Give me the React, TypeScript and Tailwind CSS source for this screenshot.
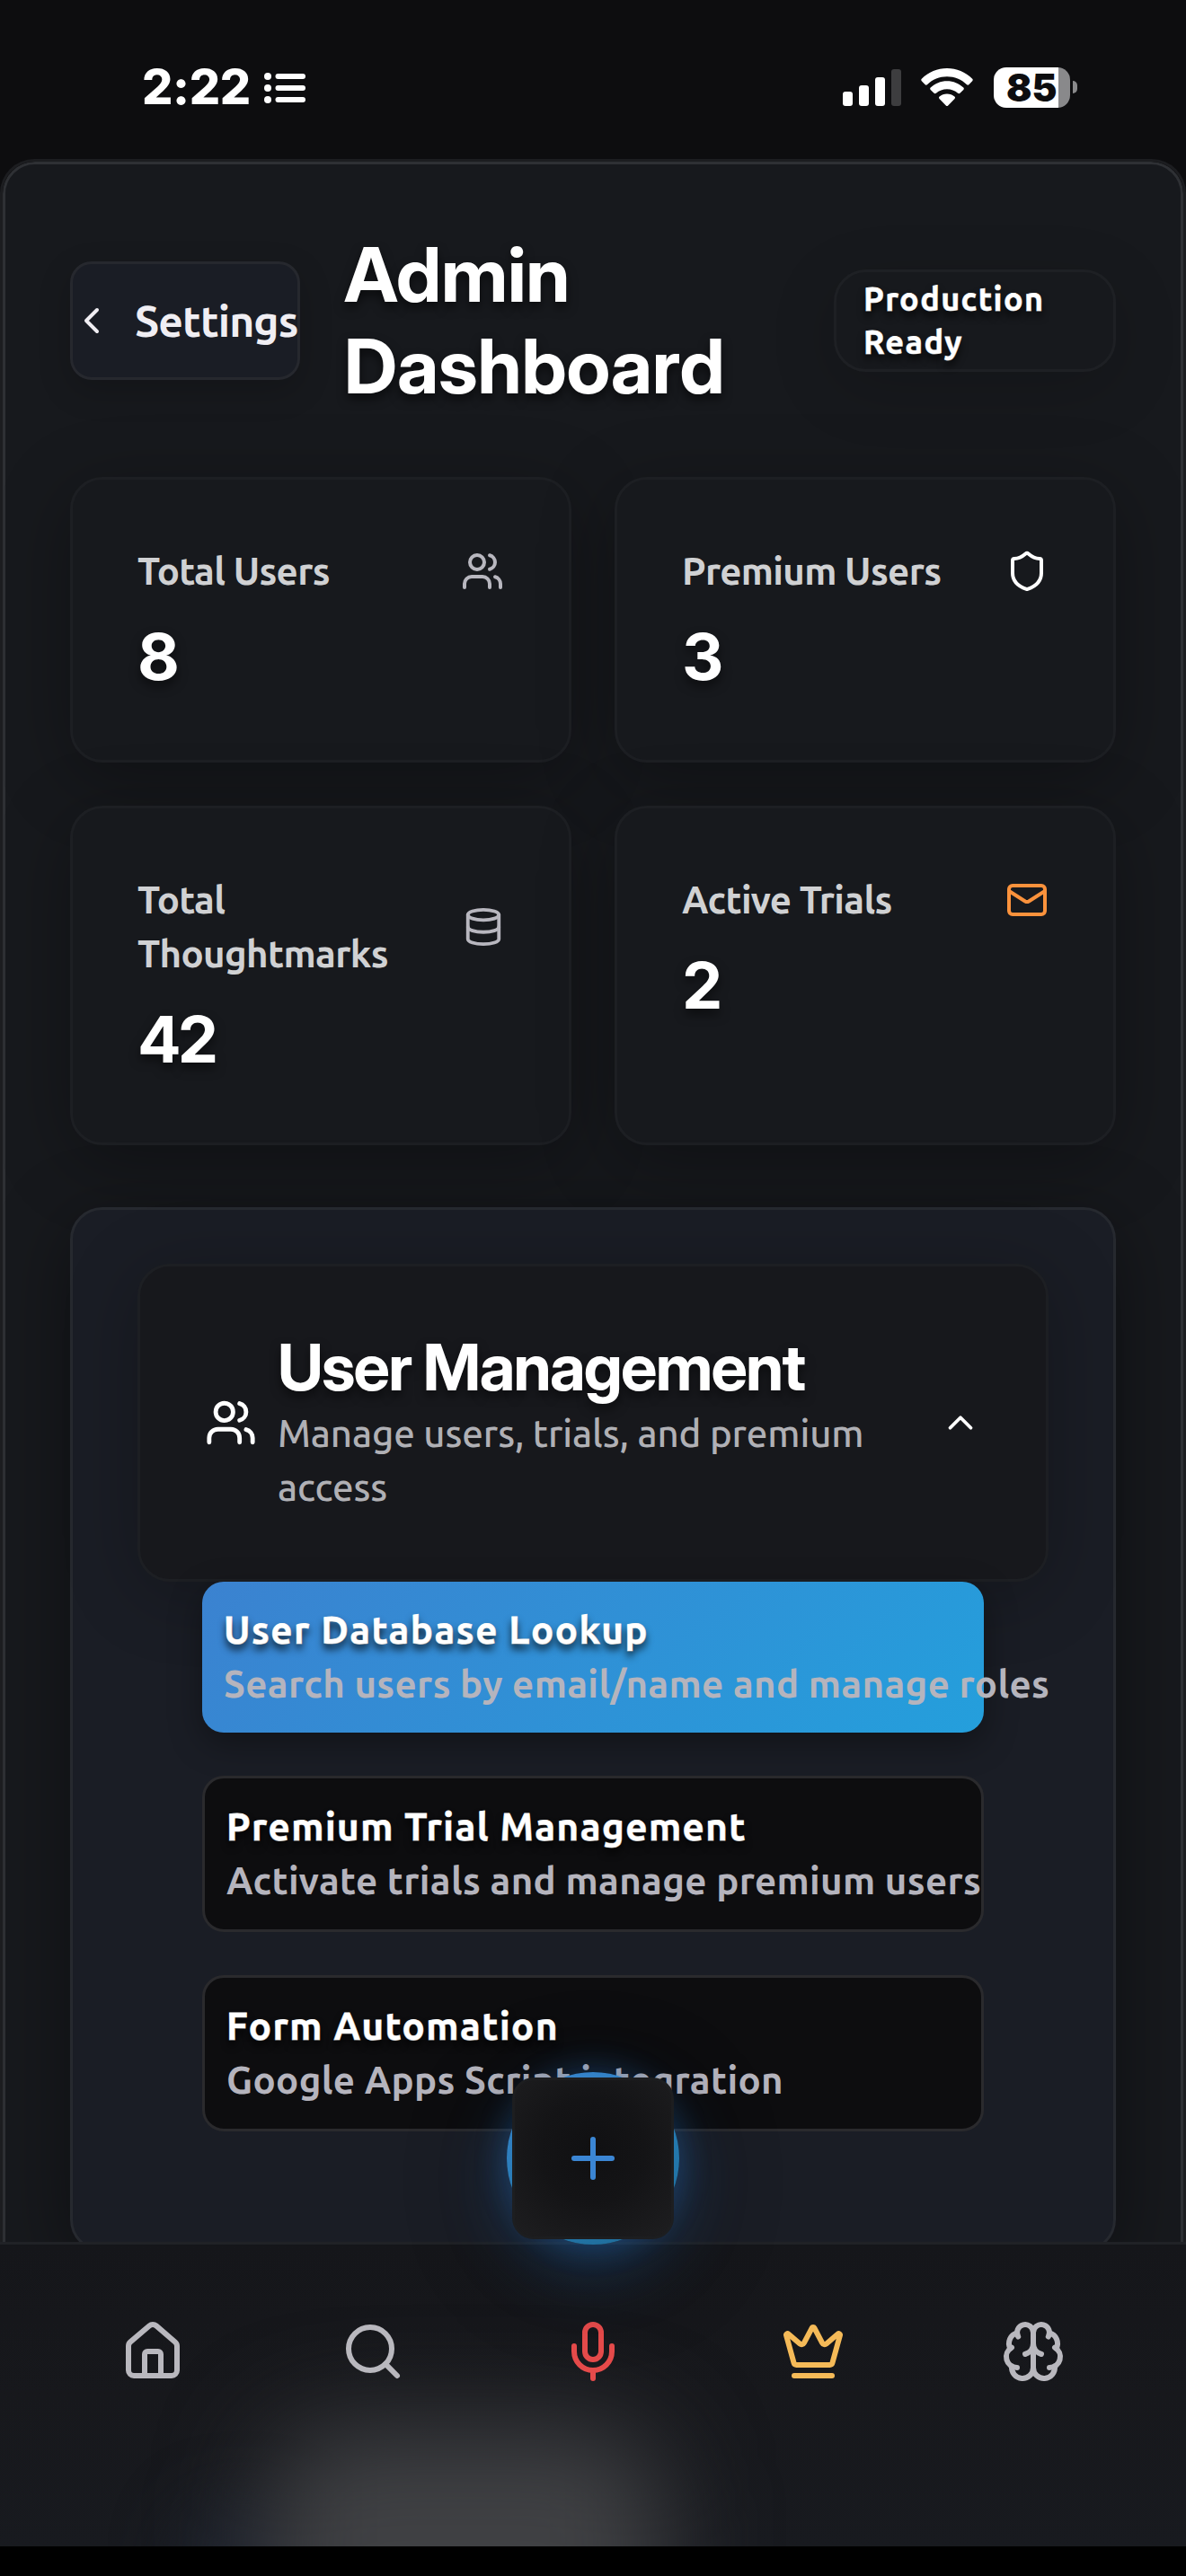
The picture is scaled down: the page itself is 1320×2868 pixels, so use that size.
import type { ReactNode } from "react";
import {
  Brain,
  ChevronLeft,
  ChevronUp,
  Crown,
  Database,
  House,
  Mail,
  Mic,
  Plus,
  Search,
  Shield,
  Users,
} from "lucide-react";

function StatusBar() {
  return (
    <div className="flex h-[177px] shrink-0 items-center justify-between pt-[17px] pr-[121px] pl-[158px] font-['Inter',sans-serif] text-white">
      <div className="flex items-center gap-[15px]">
        <span className="text-[54px] leading-none font-extrabold tracking-[-0.4px]">2:22</span>
        <svg width="46" height="34" viewBox="0 0 46 34" fill="currentColor" className="mt-px">
          <circle cx="4" cy="4" r="4" />
          <circle cx="4" cy="17" r="4" />
          <circle cx="4" cy="30" r="4" />
          <rect x="12.5" y="1" width="33.5" height="6" rx="3" />
          <rect x="12.5" y="14" width="33.5" height="6" rx="3" />
          <rect x="12.5" y="27" width="33.5" height="6" rx="3" />
        </svg>
      </div>
      <div className="flex items-center">
        <div className="flex h-[41px] items-end gap-[7px]">
          <div className="h-4 w-[11px] rounded-[3px] bg-white" />
          <div className="h-[23px] w-[11px] rounded-[3px] bg-white" />
          <div className="h-8 w-[11px] rounded-[3px] bg-white" />
          <div className="h-[41px] w-[11px] rounded-[3px] bg-[#3d3d3f]" />
        </div>
        <svg width="58" height="42" viewBox="0 0 58 42" fill="currentColor" className="ml-[22px]">
          <path d="M29 0C39.6 0 49.6 4.2 57.2 11.8c.7.7.7 1.7 0 2.4l-3.9 4c-.6.6-1.6.6-2.2 0C45.1 12.3 37.3 9.2 29 9.2S12.9 12.3 6.9 18.2c-.6.6-1.6.6-2.2 0l-3.9-4c-.7-.7-.7-1.7 0-2.4C8.4 4.2 18.400 0 29 0Z" />
          <path d="M29 14.200c7 0 13.400 2.700 18.300 7.300.7.7.7 1.700 0 2.400l-3.900 3.900c-.6.6-1.600.6-2.300 0-3.300-2.900-7.500-4.500-12.100-4.500s-8.800 1.600-12.100 4.500c-.7.6-1.700.6-2.300 0l-3.900-3.900c-.7-.7-.7-1.700 0-2.400 4.900-4.600 11.300-7.300 18.300-7.300Z" />
          <path d="M29 28.500c3.200 0 6.100 1.100 8.400 3 .8.700.8 1.700.1 2.400l-7.300 7.500c-.7.700-1.700.7-2.400 0l-7.300-7.500c-.7-.7-.7-1.700.1-2.400 2.300-1.900 5.200-3 8.400-3Z" />
        </svg>
        <div className="ml-[23px] flex h-[45px] w-[85px] items-center rounded-[14px] bg-[linear-gradient(to_right,#ffffff_72px,#89898b_72px)] pl-[14px]">
          <span className="text-[42px] leading-[45px] font-black text-[#0d0d0f]">85</span>
        </div>
        <div className="ml-[3px] h-[14px] w-[5px] rounded-r-full bg-[#89898b]" />
      </div>
    </div>
  );
}

function Header() {
  return (
    <div className="flex h-[204px] items-center">
      <div className="flex h-[132px] w-64 shrink-0 items-center gap-6 rounded-[24px] border-[3px] border-[#26282e] bg-[#1a1d25] text-[#f0eef3] shadow-[0_12px_36px_rgba(0,0,0,0.18)]">
        <ChevronLeft size={48} strokeWidth={2} className="-ml-[3px] shrink-0" />
        <span className="text-5xl leading-none font-bold tracking-[-0.9px] whitespace-nowrap">Settings</span>
      </div>
      <h1 className="ml-[49px] w-[500px] font-['Inter_Display','Inter',sans-serif] text-[84px] leading-[102px] font-bold tracking-[-0.2px] text-white [text-shadow:0_6px_12px_rgba(0,0,0,0.55)]">
        Admin Dashboard
      </h1>
      <div className="ml-auto w-[314px] rounded-[36px] border-[3px] border-[#1e2024] px-[30px] py-1.5 text-4xl leading-[48px] font-bold tracking-[1.4px] text-white shadow-[0_18px_72px_rgba(0,0,0,0.16)] [-webkit-text-stroke:0.8px_#ffffff] [paint-order:stroke_fill] [text-shadow:0_6px_9px_rgba(0,0,0,0.8)]">
        Production Ready
      </div>
    </div>
  );
}

function StatCard({ label, value, icon }: { label: string; value: string; icon: ReactNode }) {
  return (
    <div className="rounded-[36px] border-[3px] border-[#1d1f23] bg-[#17191d] p-[72px] shadow-[0_18px_84px_rgba(0,0,0,0.3)]">
      <div className="flex items-center justify-between">
        <span className="text-[42px] leading-[60px] font-bold tracking-[-0.65px] text-[#d0d1d3]">{label}</span>
        {icon}
      </div>
      <div className="h-[108px] pt-[17px] font-['Inter',sans-serif] text-[72px] leading-[96px] font-bold tracking-[-4px] text-white [text-shadow:0_6px_12px_rgba(0,0,0,0.5)]">
        {value}
      </div>
    </div>
  );
}

function ActionText({ title, detail }: { title: string; detail: string }) {
  return (
    <div className="text-[42px] leading-[60px] whitespace-nowrap">
      <div className="font-bold tracking-[1.5px] text-white [-webkit-text-stroke:0.9px_#ffffff] [paint-order:stroke_fill] [text-shadow:0_6px_9px_rgba(0,0,0,0.8)]">
        {title}
      </div>
      <div className="font-bold tracking-[0.35px] text-[#b5b4bd]">{detail}</div>
    </div>
  );
}

function UserManagement() {
  return (
    <div className="mt-[69px] h-[1163px] shrink-0 rounded-[36px] border-[3px] border-[#26292f] bg-[#1a1d25] px-[72px] pt-[60px] shadow-[0_18px_84px_rgba(0,0,0,0.4)]">
      <div className="flex h-[354px] items-center rounded-[36px] border-[3px] border-[#1d1f23] bg-[#17181c] px-[72px] shadow-[0_12px_84px_rgba(0,0,0,0.24)]">
        <Users size={58} strokeWidth={2} className="shrink-0 text-white" />
        <div className="ml-[23px] flex-1">
          <h2 className="h-[84px] font-['Inter_Display','Inter',sans-serif] text-[72px] leading-[80px] font-bold tracking-[-1.8px] whitespace-nowrap text-white [text-shadow:0_6px_12px_rgba(0,0,0,0.5)]">
            User Management
          </h2>
          <p className="w-[700px] text-[42px] leading-[60px] font-medium tracking-[-0.12px] text-[#b0b0b5]">
            Manage users, trials, and premium access
          </p>
        </div>
        <ChevronUp size={46} strokeWidth={2} className="shrink-0 text-white" />
      </div>
      <div className="flex flex-col gap-12 px-[72px]">
        <div className="relative rounded-[24px] bg-[linear-gradient(135deg,#3b82d0_0%,#249fdc_100%)] p-6 shadow-[0_12px_36px_rgba(0,0,0,0.35)]">
          <ActionText title="User Database Lookup" detail="Search users by email/name and manage roles" />
        </div>
        <div className="rounded-[24px] border-[3px] border-[#2a2a2d] bg-[#0d0d0f] p-6">
          <ActionText title="Premium Trial Management" detail="Activate trials and manage premium users" />
        </div>
        <div className="rounded-[24px] border-[3px] border-[#2a2a2d] bg-[#0d0d0f] p-6">
          <ActionText title="Form Automation" detail="Google Apps Script integration" />
        </div>
      </div>
    </div>
  );
}

function BottomNav() {
  return (
    <div className="relative h-[339px] shrink-0">
      <div className="absolute inset-0 overflow-hidden border-t-[3px] border-[#202226] bg-[linear-gradient(to_bottom,#15161a_0%,#17181c_50%,#181a1f_100%)]">
        <div className="absolute top-[290px] left-[200px] h-[140px] w-[140px] rounded-full bg-[#1b202b] blur-[36px]" />
        <div className="absolute top-[205px] left-[296px] h-[340px] w-[440px] rounded-[80px] bg-[#404144] blur-[58px]" />
      </div>
      <div className="relative flex h-[243px] items-center px-12">
        <div className="flex flex-1 justify-center text-[#b9b8be]">
          <House size={72} />
        </div>
        <div className="flex flex-1 justify-center text-[#b9b8be]">
          <Search size={72} />
        </div>
        <div className="flex flex-1 justify-center text-[#e64b4b]">
          <Mic size={72} />
        </div>
        <div className="flex flex-1 justify-center text-[#f5ba58]">
          <Crown size={72} />
        </div>
        <div className="flex flex-1 justify-center text-[#b9b8be]">
          <Brain size={72} />
        </div>
      </div>
      <div className="absolute -top-[189px] left-[564px] flex size-48 items-center justify-center rounded-full bg-[linear-gradient(155deg,#3684cc_10%,#2479ae_60%,#1e6a96_100%)] shadow-[0_24px_72px_rgba(40,120,205,0.36),0_0_36px_rgba(40,120,205,0.3),0_24px_120px_rgba(0,0,0,0.3)]">
        <div className="flex size-[180px] items-center justify-center rounded-[24px] border-[3px] border-[#1d1e20] bg-[radial-gradient(circle_at_50%_45%,#101012_0%,#141416_45%,#1e1e20_100%)]">
          <Plus size={72} strokeWidth={2} className="text-[#3b86d4]" />
        </div>
      </div>
    </div>
  );
}

export default function App() {
  return (
    <div className="flex h-[2868px] w-[1320px] flex-col overflow-hidden bg-[#0d0d0f] font-['Ubuntu','Noto_Sans',sans-serif]">
      <StatusBar />
      <div className="h-[2319px] shrink-0 overflow-hidden rounded-t-[38px] border-x-[3px] border-t-[3px] border-[#1c1d20]">
        <div className="flex h-[2400px] flex-col rounded-t-[36px] border-[3px] border-[#2e3034] bg-[#17191d] px-[72px] pt-[72px]">
          <Header />
          <div className="mt-[72px] grid shrink-0 grid-cols-2 gap-12">
            <StatCard label="Total Users" value="8" icon={<Users size={48} className="shrink-0 text-[#b8b7bf]" />} />
            <StatCard label="Premium Users" value="3" icon={<Shield size={48} className="shrink-0 text-white" />} />
            <StatCard
              label="Total Thoughtmarks"
              value="42"
              icon={<Database className="h-12 w-[46px] shrink-0 text-[#b8b7bf]" />}
            />
            <StatCard label="Active Trials" value="2" icon={<Mail size={48} className="shrink-0 text-[#fb923c]" />} />
          </div>
          <UserManagement />
        </div>
      </div>
      <BottomNav />
      <div className="h-[33px] shrink-0 bg-black" />
    </div>
  );
}
